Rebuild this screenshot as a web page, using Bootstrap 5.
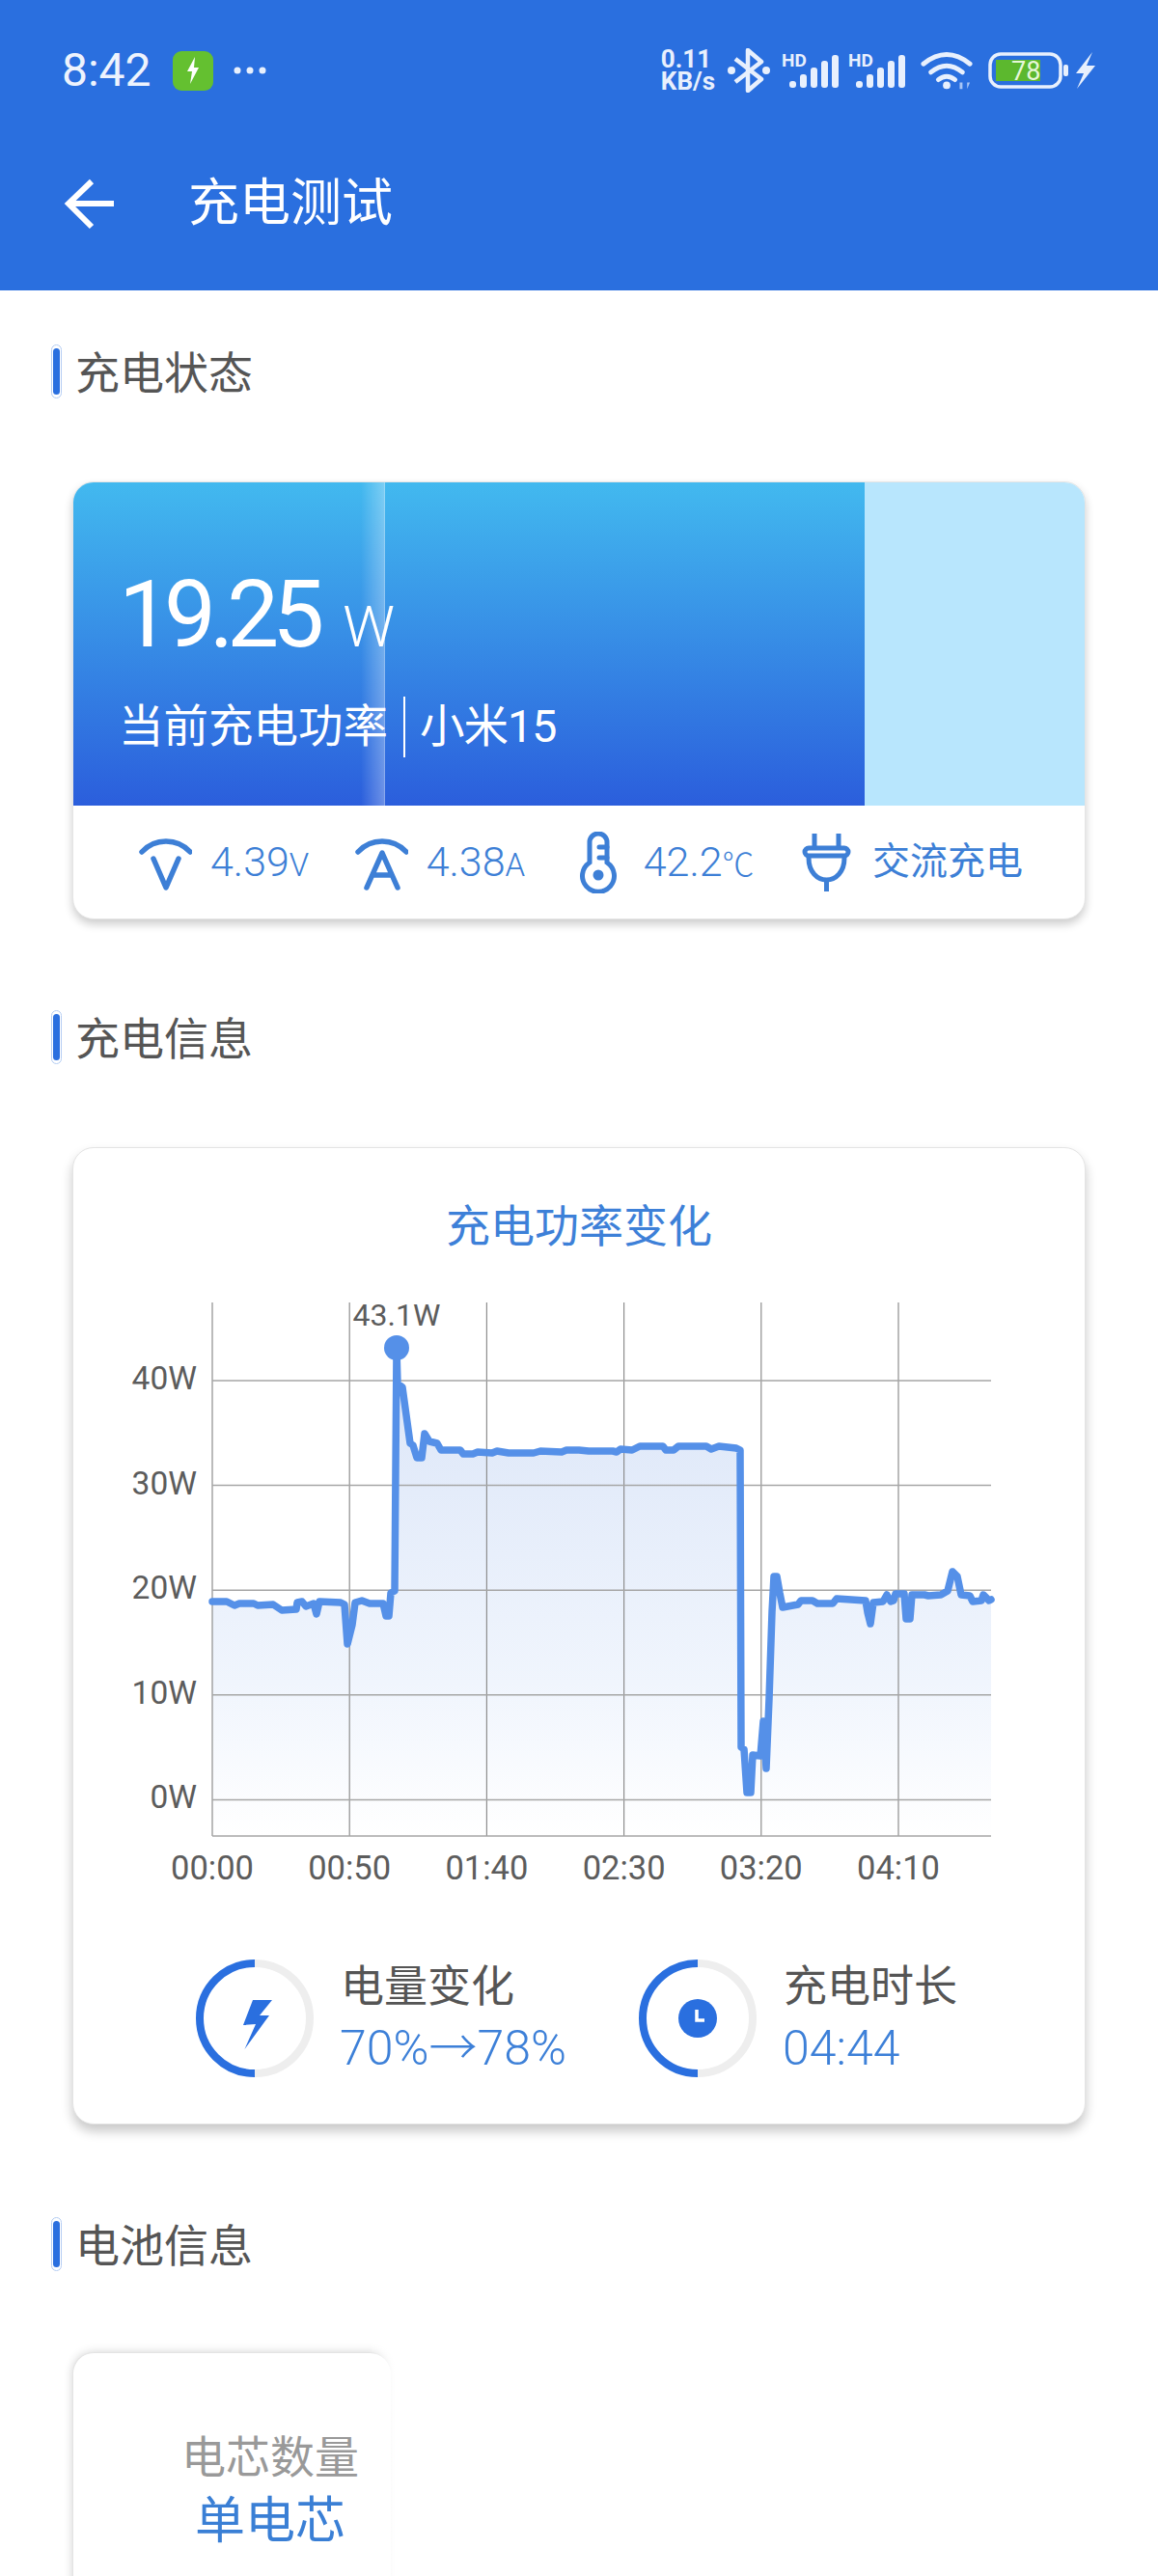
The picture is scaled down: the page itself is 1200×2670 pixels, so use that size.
<!DOCTYPE html>
<html lang="zh-CN">
<head>
  <meta charset="utf-8">
  <title>充电测试</title>
  <link href="https://cdn.jsdelivr.net/npm/bootstrap@5.3.0/dist/css/bootstrap.min.css" rel="stylesheet">
  <style>
    body { font-family: Roboto, "Noto Sans CJK SC", sans-serif; background: #fff; color: #555; }
    .page { width: 1200px; height: 2670px; overflow: hidden; }

    /* header */
    .app-head { background: #2a6fdf; height: 301px; color: #fff; padding-top: 50px; }
    .status-row { height: 46px; padding: 0 64px 0 64px; }
    .clock-text { font-size: 48px; font-weight: 400; line-height: 46px; color: #eef3fd; width: 92px; white-space: nowrap; }
    .app-chip { width: 42px; height: 41px; border-radius: 9px; background: #64c030; margin-left: 23px; }
    .more-dots { margin-left: 21px; }
    .net-speed { font-weight: 700; font-size: 26px; line-height: 23px; color: #e8f0fd; margin-right: 13px; white-space: nowrap; }
    .sig-wrap { position: relative; width: 59px; height: 46px; }
    .sig-one { margin-left: 12px; }
    .sig-two { margin-left: 10px; }
    .hd-tag { position: absolute; left: 0; top: 3px; font-size: 19px; font-weight: 700; line-height: 1; color: #e8f0fd; }
    .batt-text { font-size: 27px; fill: #e6f7d8; font-family: Roboto, sans-serif; }
    .nav-row { margin-top: 91px; height: 48px; padding-left: 66px; gap: 75px; }
    .nav-title { font-size: 53px; line-height: 48px; color: #fff; }

    /* section heading */
    .sec-head { margin-left: 53px; gap: 14px; height: 56px; }
    .sec-bar { width: 11px; height: 56px; padding: 3px 1px; border: 1px solid #b4cdf3; border-radius: 6px; }
    .sec-bar i { display: block; height: 100%; background: #2a6fdf; border-radius: 4px; }
    .sec-text { font-size: 46px; line-height: 56px; color: #555; padding-top: 4px; }
    .gap-a { margin-top: 56px; }
    .gap-b { margin-top: 96px; }
    .gap-c { margin-top: 94px; }

    /* cards */
    .panel { margin: 86px 75px 0; border: 1px solid #e4e4e4; border-radius: 22px; box-shadow: 0 5px 10px rgba(0, 0, 0, .2); overflow: hidden; background: #fff; }
    .panel-chart { margin-top: 86px; overflow: visible; box-shadow: 0 7px 12px rgba(0, 0, 0, .22); }

    /* power hero */
    .hero { height: 335px; background: #b8e6fd; position: relative; }
    .hero-fill { width: 820px; height: 100%; background: linear-gradient(180deg, #42b9ef, #2b5edc); padding: 89px 0 0 47px; color: #fff; }
    .hero-shine { position: absolute; left: 298px; top: 0; width: 25px; height: 100%; background: linear-gradient(90deg, rgba(255, 255, 255, 0), rgba(255, 255, 255, .3)); border-right: 1px solid rgba(255, 255, 255, .45); }
    .hero-num { font-size: 96px; line-height: 96px; font-weight: 400; letter-spacing: -7px; }
    .hero-unit { font-size: 60px; line-height: 96px; font-weight: 300; margin-left: 26px; }
    .hero-sub { margin-top: 24px; height: 63px; font-size: 46.5px; line-height: 63px; }
    .hero-sub i { display: block; width: 2px; height: 63px; background: #fff; margin: 0 15px 0 16px; }
    .hero-model { letter-spacing: -1px; }

    /* stats under the hero */
    .stat-row { height: 117px; padding-left: 68px; color: #3d7fd6; }
    .stat-item { gap: 19px; margin-right: 47.5px; }
    .stat-val { font-size: 43px; line-height: 1; font-weight: 300; white-space: nowrap; }
    .stat-val small { font-size: 33px; font-weight: 300; }
    .stat-cn { font-size: 39px; line-height: 1; white-space: nowrap; }

    /* chart card */
    .chart-title { padding-top: 51px; font-size: 46px; line-height: 60px; color: #3d80d8; text-align: center; }
    .chart-svg { display: block; }
    .chart-svg text { font-family: Roboto, sans-serif; font-size: 33.5px; fill: #5c5c5c; font-weight: 400; }
    .chart-svg .x-tick { font-size: 34.5px; }
    .chart-svg .peak-tag { font-size: 32px; }
    .gauge-row { margin-top: 49px; padding: 0 0 48px 127px; }
    .gauge { width: 459px; gap: 27px; }
    .gauge-name { font-size: 45px; line-height: 60px; color: #555; padding-left: 1px; }
    .gauge-val { font-size: 50px; line-height: 60px; color: #3d80d8; font-weight: 300; padding-top: 3px; }

    /* battery card, cut by the window */
    .panel-cell { width: 330px; height: 400px; margin-top: 84px; overflow: visible; position: relative; border-right: 0; box-shadow: 0 0 10px rgba(0, 0, 0, .18); padding-top: 78px; text-align: center; }
    .panel-cell::after { content: ""; position: absolute; left: 306px; top: -24px; width: 40px; height: 460px; background: linear-gradient(90deg, rgba(255, 255, 255, 0), #fff 70%); }
    .cell-name { font-size: 46px; line-height: 60px; color: #999; width: 408px; }
    .cell-val { font-size: 52px; line-height: 73px; color: #3a7fd5; width: 408px; }
  </style>
</head>
<body>
<div class="page">

  <header class="app-head">
    <div class="status-row d-flex align-items-center justify-content-between">
      <div class="d-flex align-items-center">
        <span class="clock-text">8:42</span>
        <span class="app-chip d-flex align-items-center justify-content-center">
          <svg width="16" height="28" viewBox="0 0 16 28"><path d="M10 0 2 15h5l-2 13 9-17H9z" fill="#fff"/></svg>
        </span>
        <svg class="more-dots" width="34" height="8" viewBox="0 0 34 8"><g fill="#e8f0fd"><circle cx="4" cy="4" r="3.5"/><circle cx="17" cy="4" r="3.5"/><circle cx="30" cy="4" r="3.5"/></g></svg>
      </div>
      <div class="d-flex align-items-center">
        <div class="net-speed">0.11<br>KB/s</div>
        <svg width="44" height="46" viewBox="0 0 44 46"><g fill="none" stroke="#e8f0fd" stroke-width="4.5" stroke-linejoin="round"><path d="M8 11 35 32 21 44V2l14 12L8 35"/></g><circle cx="4" cy="23" r="4" fill="#e8f0fd"/><circle cx="40" cy="23" r="4" fill="#e8f0fd"/></svg>
        <div class="sig-wrap sig-one">
          <span class="hd-tag">HD</span>
          <svg width="59" height="46" viewBox="0 0 59 46"><g fill="#e8f0fd"><rect x="8" y="34" width="7" height="7" rx="3"/><rect x="19" y="27" width="7" height="14" rx="3"/><rect x="30" y="20" width="7" height="21" rx="3"/><rect x="41" y="13" width="7" height="28" rx="3"/><rect x="52" y="7" width="7" height="34" rx="3"/></g></svg>
        </div>
        <div class="sig-wrap sig-two">
          <span class="hd-tag">HD</span>
          <svg width="59" height="46" viewBox="0 0 59 46"><g fill="#e8f0fd"><rect x="8" y="34" width="7" height="7" rx="3"/><rect x="19" y="27" width="7" height="14" rx="3"/><rect x="30" y="20" width="7" height="21" rx="3"/><rect x="41" y="13" width="7" height="28" rx="3"/><rect x="52" y="7" width="7" height="34" rx="3"/></g></svg>
        </div>
        <svg class="ms-3" width="54" height="42" viewBox="0 0 56 42"><g fill="none" stroke="#e8f0fd" stroke-width="5" stroke-linecap="round"><path d="M3 14Q28-6 53 14"/><path d="M11 23Q28 9 45 23"/><path d="M19 31Q28 24 37 31"/></g><circle cx="28" cy="37" r="4" fill="#e8f0fd"/><path d="M42 34v7h3v-7zM50 41v-7h3z" fill="#a9c6f5"/></svg>
        <svg class="ms-3" width="112" height="40" viewBox="0 0 112 40">
          <rect x="2" y="3" width="73" height="34" rx="11" fill="none" stroke="#e8f0fd" stroke-width="3.5"/>
          <rect x="8" y="9" width="46" height="22" fill="#5cb82e"/>
          <text class="batt-text" x="24" y="30">78</text>
          <rect x="78" y="14" width="5" height="12" rx="2" fill="#e8f0fd"/>
          <path d="M108 1 91 23h8l-7 16 19-24h-9z" fill="#e8f0fd"/>
        </svg>
      </div>
    </div>
    <div class="nav-row d-flex align-items-center">
      <svg width="54" height="54" viewBox="0 0 54 54"><path d="M52 27H6M29 4 5 27l24 24" fill="none" stroke="#fff" stroke-width="6"/></svg>
      <span class="nav-title">充电测试</span>
    </div>
  </header>

  <div class="sec-head gap-a d-flex align-items-center"><span class="sec-bar"><i></i></span><span class="sec-text">充电状态</span></div>

  <section class="card panel">
    <div class="hero">
      <div class="hero-fill">
        <div class="d-flex align-items-baseline"><span class="hero-num">19.25</span><span class="hero-unit">W</span></div>
        <div class="hero-sub d-flex"><span>当前充电功率</span><i></i><span class="hero-model">小米15</span></div>
      </div>
      <div class="hero-shine"></div>
    </div>
    <div class="stat-row d-flex align-items-center">
      <div class="stat-item d-flex align-items-center">
        <svg width="55" height="60" viewBox="0 0 55 60"><g fill="none" stroke="#3d7fd6" stroke-width="5.5" stroke-linecap="round" stroke-linejoin="round"><path d="M3 19A34 34 0 0 1 53 19"/><path d="M15 26 28 56 41 26"/></g></svg>
        <span class="stat-val">4.39<small>V</small></span>
      </div>
      <div class="stat-item d-flex align-items-center">
        <svg width="55" height="60" viewBox="0 0 55 60"><g fill="none" stroke="#3d7fd6" stroke-width="5.5" stroke-linecap="round" stroke-linejoin="round"><path d="M3 19A34 34 0 0 1 53 19"/><path d="M12 56 28 20 44 56M18 43H38"/></g></svg>
        <span class="stat-val">4.38<small>A</small></span>
      </div>
      <div class="stat-item d-flex align-items-center">
        <svg width="56" height="64" viewBox="0 0 56 64"><g fill="none" stroke="#3d7fd6" stroke-width="5" stroke-linecap="round"><path d="M19 32V11a9 9 0 0 1 18 0V32A16.500 16.500 0 1 1 19 32Z"/><path d="M29 16H37M29 27H37"/></g><circle cx="28" cy="45" r="5.500" fill="#3d7fd6"/></svg>
        <span class="stat-val">42.2<small>℃</small></span>
      </div>
      <div class="stat-item d-flex align-items-center">
        <svg width="56" height="64" viewBox="0 0 56 64"><g fill="none" stroke="#3d7fd6" stroke-width="5"><path d="M15 2V17M40 2V17"/><rect x="5" y="17" width="45" height="8" rx="4"/><path d="M9 27C9 42 18 50 27.500 50S46 42 46 27"/><path d="M27.500 50V62"/></g></svg>
        <span class="stat-cn">交流充电</span>
      </div>
    </div>
  </section>

  <div class="sec-head gap-c d-flex align-items-center"><span class="sec-bar"><i></i></span><span class="sec-text">充电信息</span></div>

  <section class="card panel panel-chart">
    <div class="chart-title">充电功率变化</div>
    <svg class="chart-svg" id="power-chart" width="1048" height="680" viewBox="76 1300 1048 680">
      <defs>
        <linearGradient id="area-fade" gradientUnits="userSpaceOnUse" x1="0" y1="1480" x2="0" y2="1902">
          <stop offset="0" stop-color="#e0e9f9"/>
          <stop offset=".62" stop-color="#f0f5fd"/>
          <stop offset="1" stop-color="#ffffff"/>
        </linearGradient>
      </defs>
      <path id="power-area" fill="url(#area-fade)"/>
      <g stroke="#8e8e8e" stroke-width="1.200" id="grid-v"></g>
      <g stroke="#a6a6a6" stroke-width="1.500" id="grid-h"></g>
      <path id="power-line" fill="none" stroke="#5590e8" stroke-width="7.500" stroke-linejoin="round" stroke-linecap="round"/>
      <circle cx="411" cy="1396" r="13" fill="#5590e8"/>
      <text class="peak-tag" x="411" y="1373" text-anchor="middle">43.1W</text>
      <g id="axis-labels"></g>
    </svg>
    <div class="gauge-row d-flex">
      <div class="gauge d-flex align-items-center">
        <svg width="122" height="122" viewBox="0 0 122 122">
          <path d="M61 4A57 57 0 0 1 61 118" fill="none" stroke="#eeeeee" stroke-width="8"/>
          <path d="M61 4A57 57 0 0 0 61 118" fill="none" stroke="#2a6fdf" stroke-width="8"/>
          <path d="M79 42H59L49 68 62 67 50.500 93 76 58H66z" fill="#2a6fdf"/>
        </svg>
        <div><div class="gauge-name">电量变化</div><div class="gauge-val">70%→78%</div></div>
      </div>
      <div class="gauge d-flex align-items-center">
        <svg width="122" height="122" viewBox="0 0 122 122">
          <path d="M61 4A57 57 0 0 1 61 118" fill="none" stroke="#eeeeee" stroke-width="8"/>
          <path d="M61 4A57 57 0 0 0 61 118" fill="none" stroke="#2a6fdf" stroke-width="8"/>
          <circle cx="61" cy="61" r="20" fill="#2a6fdf"/>
          <path d="M60 52V63H68" fill="none" stroke="#fff" stroke-width="3.500"/>
        </svg>
        <div><div class="gauge-name">充电时长</div><div class="gauge-val">04:44</div></div>
      </div>
    </div>
  </section>

  <div class="sec-head gap-b d-flex align-items-center"><span class="sec-bar"><i></i></span><span class="sec-text">电池信息</span></div>

  <section class="card panel panel-cell">
    <div class="cell-name">电芯数量</div>
    <div class="cell-val">单电芯</div>
  </section>

</div>

<script src="https://cdn.jsdelivr.net/npm/bootstrap@5.3.0/dist/js/bootstrap.bundle.min.js"></script>
<script>
  // power curve, page pixel coordinates
  const curve = [
    [220,1659],[235,1659],[243,1663],[248,1661],[263,1661],[267,1663],[283,1662],[292,1668],[307,1667],[308,1660],[313,1659],[317,1664],[325,1661],[328,1672],[331,1659],[353,1660],[357,1662],[360,1703],[365,1683],[368,1660],[375,1658],[383,1661],[397,1661],[400,1674],[403,1674],[405,1650],[409,1648],
    [411,1397],[412,1433],[417,1437],[425,1495],[428,1497],[432,1510],[437,1510],[440,1485],[445,1493],[453,1495],[457,1502],[477,1502],[480,1506],[490,1506],[495,1504],[510,1505],[515,1503],[527,1505],[553,1505],[560,1503],[582,1504],[587,1502],[600,1502],
    [610,1503],[635,1503],[639,1504],[643,1501],[655,1502],[663,1498],[687,1498],[690,1502],[698,1502],[703,1498],[732,1498],[737,1501],[745,1498],[763,1500],[767,1502],
    [768,1810],[771,1812],[774,1857],[778,1857],[780,1818],[788,1819],[791,1783],[794,1832],[797,1760],[800,1670],[802,1633],[805,1633],[808,1650],[811,1665],[827,1662],[830,1658],[842,1658],[847,1661],[863,1661],[867,1656],[897,1658],[899,1670],[902,1682],[905,1660],[915,1659],[919,1652],[923,1659],[926,1658],[928,1651],[937,1651],[939,1677],[943,1677],[945,1652],[958,1652],[962,1653],[975,1652],[982,1648],[987,1628],[992,1633],[996,1652],[1005,1653],[1008,1659],[1017,1658],[1019,1652],[1025,1658],[1027,1657]
  ];
  const linePath = 'M' + curve.map(p => p.join(' ')).join('L');
  document.getElementById('power-line').setAttribute('d', linePath);
  document.getElementById('power-area').setAttribute('d', linePath + 'L1027 1902L220 1902Z');

  const ns = 'http://www.w3.org/2000/svg';
  function addEl(parent, tag, attrs, text) {
    const el = document.createElementNS(ns, tag);
    Object.keys(attrs).forEach(k => el.setAttribute(k, attrs[k]));
    if (text) el.textContent = text;
    parent.appendChild(el);
  }

  const gridV = document.getElementById('grid-v');
  const gridH = document.getElementById('grid-h');
  const labels = document.getElementById('axis-labels');
  ['00:00', '00:50', '01:40', '02:30', '03:20', '04:10'].forEach((t, i) => {
    const x = 220 + i * 142.2;
    addEl(gridV, 'line', { x1: x, x2: x, y1: 1349, y2: 1902 });
    addEl(labels, 'text', { class: 'x-tick', x: x, y: 1947, 'text-anchor': 'middle' }, t);
  });
  ['40W', '30W', '20W', '10W', '0W'].forEach((t, i) => {
    const y = 1430 + i * 108.6;
    addEl(gridH, 'line', { x1: 220, x2: 1027, y1: y, y2: y });
    addEl(labels, 'text', { x: 204, y: y + 9, 'text-anchor': 'end' }, t);
  });
  addEl(gridH, 'line', { x1: 220, x2: 1027, y1: 1902, y2: 1902 });
</script>
</body>
</html>
